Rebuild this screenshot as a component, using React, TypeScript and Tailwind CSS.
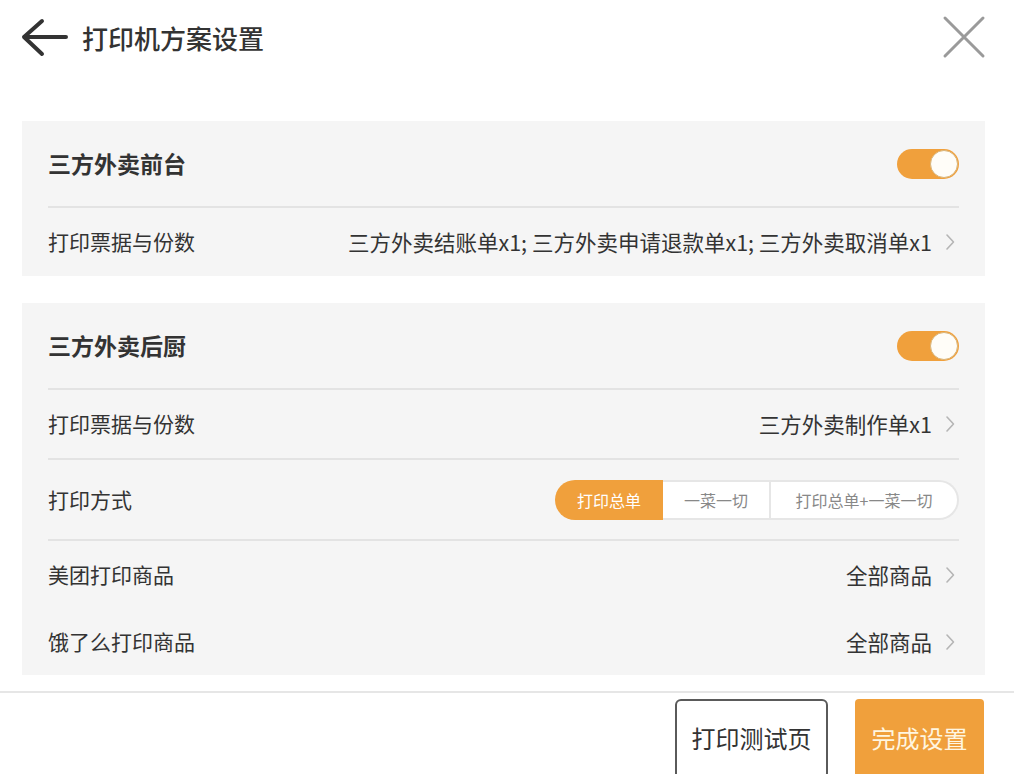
import React from 'react';

const font = { fontFamily: '"Noto Sans CJK SC", "Noto Sans", sans-serif' };

const Chevron = () => (
  <svg width="12" height="18" viewBox="0 0 12 18" className="ml-[12px]">
    <path d="M3 2 L9.5 9 L3 16" fill="none" stroke="#b5b5b5" strokeWidth="1.6" strokeLinecap="round" strokeLinejoin="round" />
  </svg>
);

const Toggle = () => (
  <div className="relative h-[30px] w-[62px] rounded-full bg-[#f0a03c]">
    <div className="absolute right-[1px] top-[1px] h-[28px] w-[28px] rounded-full border border-[#d9b57a] bg-[#fffdf8]" />
  </div>
);

const Divider = () => <div className="h-[2px] bg-[#e3e3e3]" />;

const LinkRow = ({ label, value, h }: { label: string; value: string; h: string }) => (
  <div className={`flex items-center justify-between ${h}`}>
    <span className="text-[21px] text-[#333]">{label}</span>
    <div className="flex items-center pr-[3px]">
      <span className="text-[21.5px] text-[#333]">{value}</span>
      <Chevron />
    </div>
  </div>
);

export default function App() {
  return (
    <div className="h-[774px] w-[1014px] overflow-hidden bg-white" style={font}>
      <div className="flex h-[74px] items-center justify-between pl-[20px] pr-[28px]">
        <div className="flex items-center">
          <svg width="48" height="44" viewBox="0 0 48 44">
            <path d="M22 6 L4 22 L22 39 M4 22 L46 22" fill="none" stroke="#333" strokeWidth="4" strokeLinecap="round" strokeLinejoin="round" />
          </svg>
          <span className="ml-[14px] text-[26px] font-medium text-[#333]">打印机方案设置</span>
        </div>
        <svg width="44" height="44" viewBox="0 0 44 44">
          <path d="M3 3 L41 41 M41 3 L3 41" fill="none" stroke="#9a9a9a" strokeWidth="3" strokeLinecap="round" />
        </svg>
      </div>

      <div className="ml-[22px] mr-[29px] mt-[47px] bg-[#f5f5f5] px-[26px]">
        <div className="flex h-[85px] items-center justify-between">
          <span className="text-[23px] font-bold text-[#333]">三方外卖前台</span>
          <Toggle />
        </div>
        <Divider />
        <LinkRow label="打印票据与份数" value="三方外卖结账单x1; 三方外卖申请退款单x1; 三方外卖取消单x1" h="h-[68px]" />
      </div>

      <div className="ml-[22px] mr-[29px] mt-[27px] bg-[#f5f5f5] px-[26px]">
        <div className="flex h-[85px] items-center justify-between">
          <span className="text-[23px] font-bold text-[#333]">三方外卖后厨</span>
          <Toggle />
        </div>
        <Divider />
        <LinkRow label="打印票据与份数" value="三方外卖制作单x1" h="h-[68px]" />
        <Divider />
        <div className="flex h-[79px] items-center justify-between">
          <span className="text-[21px] text-[#333]">打印方式</span>
          <div className="flex h-[40px] text-[16px]">
            <div className="flex w-[108px] items-center justify-center rounded-l-full bg-[#f0a03c] text-white">打印总单</div>
            <div className="flex w-[108px] items-center justify-center border-y-2 border-r-2 border-[#e6e6e6] bg-white text-[#888]">一菜一切</div>
            <div className="flex w-[188px] items-center justify-center rounded-r-full border-y-2 border-r-2 border-[#e6e6e6] bg-white text-[#888]">打印总单+一菜一切</div>
          </div>
        </div>
        <Divider />
        <LinkRow label="美团打印商品" value="全部商品" h="h-[68px]" />
        <LinkRow label="饿了么打印商品" value="全部商品" h="h-[66px]" />
      </div>

      <div className="mt-[16px] h-[2px] bg-[#e6e6e6]" />
      <div className="flex justify-end gap-[27px] pr-[30px] pt-[6px]">
        <button className="flex h-[80px] w-[153px] shrink-0 items-start justify-center rounded-[6px] border-2 border-[#5a5a5a] bg-white pt-[19px] text-[24px] text-[#333]">打印测试页</button>
        <button className="flex h-[80px] w-[129px] shrink-0 items-start justify-center rounded-[4px] bg-[#f0a03c] pt-[21px] text-[24px] text-[#fff6e0]">完成设置</button>
      </div>
    </div>
  );
}
